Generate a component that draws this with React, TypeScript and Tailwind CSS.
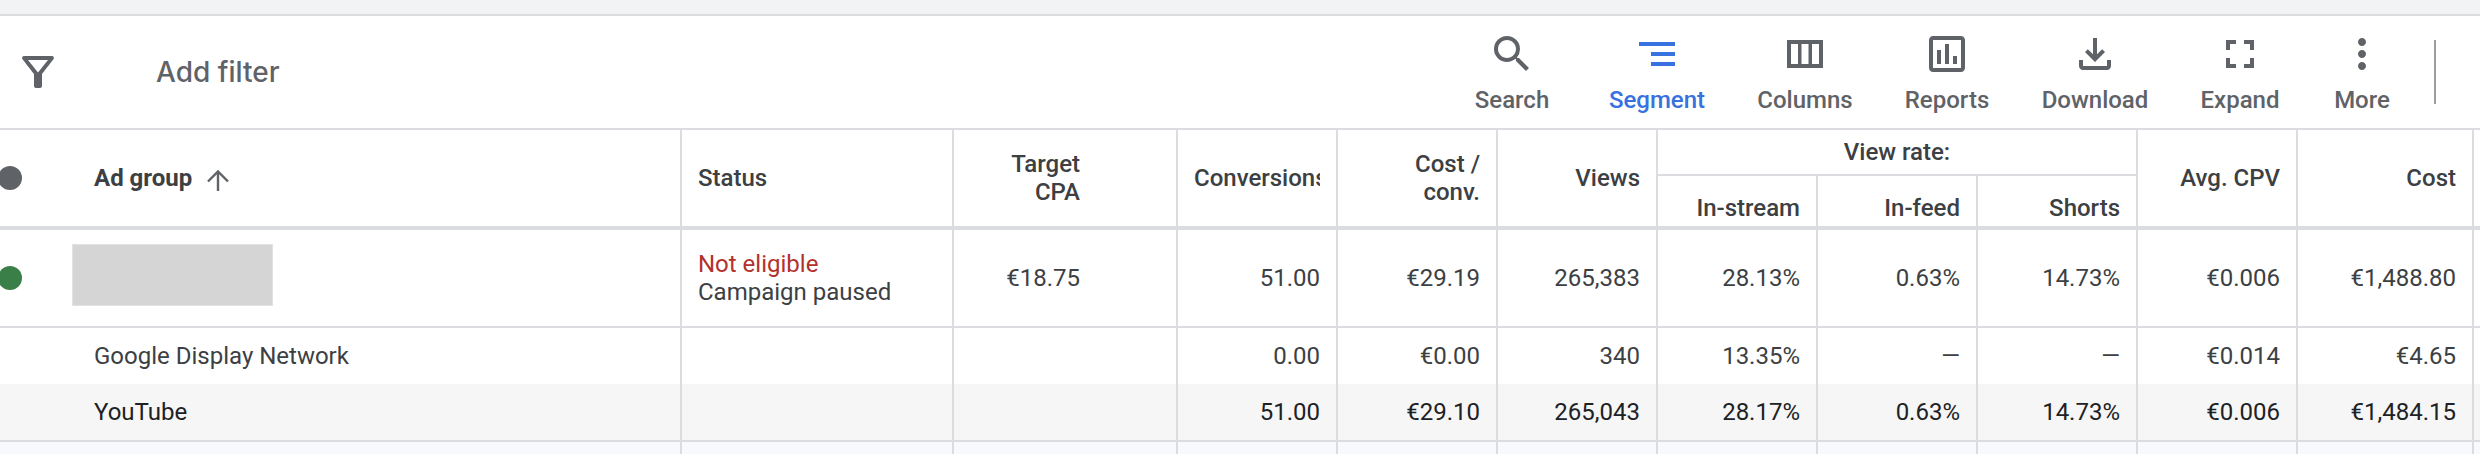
import React from 'react';
import clsx from 'clsx';

interface Tool {
  label: string;
  width: string;
  active?: boolean;
  icon: React.ReactNode;
}

interface Row {
  name: string | null; // null = name is hidden
  enabled?: boolean;
  status?: string[];
  values: string[];
  rowClass: string;
  cellClass: string;
}

const TOOLS: Tool[] = [
  {
    label: 'Search',
    width: 'w-[140px]',
    icon: (
      <path d="M15.5 14h-.79l-.28-.27A6.47 6.47 0 0 0 16 9.5 6.5 6.5 0 1 0 9.5 16c1.61 0 3.09-.59 4.23-1.57l.27.28v.79l5 4.99L20.49 19l-4.99-5zm-6 0C7.01 14 5 11.99 5 9.5S7.01 5 9.5 5 14 7.01 14 9.5 11.99 14 9.5 14z" />
    ),
  },
  {
    label: 'Segment',
    width: 'w-[150px]',
    active: true,
    icon: <path d="M3 6h18v2H3zM9 11h12v2H9zM9 16h12v2H9z" />,
  },
  {
    label: 'Columns',
    width: 'w-[146px]',
    icon: (
      <path
        fillRule="evenodd"
        d="M3 5h18v14H3zM5 7v10h3.5V7zM10.25 7v10h3.5V7zM15.5 7v10H19V7z"
      />
    ),
  },
  {
    label: 'Reports',
    width: 'w-[138px]',
    icon: (
      <path
        fillRule="evenodd"
        d="M5 3h14c1.1 0 2 .9 2 2v14c0 1.1-.9 2-2 2H5c-1.1 0-2-.9-2-2V5c0-1.1.9-2 2-2zM5 5v14h14V5zM7 10h2v7H7zM11 7h2v10h-2zM15 13h2v4h-2z"
      />
    ),
  },
  {
    label: 'Download',
    width: 'w-[158px]',
    icon: (
      <path d="M18 15v3H6v-3H4v3c0 1.1.9 2 2 2h12c1.1 0 2-.9 2-2v-3h-2zm-1-4-1.41-1.41L13 12.17V4h-2v8.17L8.41 9.59 7 11l5 5 5-5z" />
    ),
  },
  {
    label: 'Expand',
    width: 'w-[132px]',
    icon: (
      <path d="M7 14H5v5h5v-2H7v-3zm-2-4h2V7h3V5H5v5zm12 7h-3v2h5v-5h-2v3zM14 5v2h3v3h2V5h-5z" />
    ),
  },
  {
    label: 'More',
    width: 'w-[112px]',
    icon: (
      <path d="M12 8c1.1 0 2-.9 2-2s-.9-2-2-2-2 .9-2 2 .9 2 2 2zm0 2c-1.1 0-2 .9-2 2s.9 2 2 2 2-.9 2-2-.9-2-2-2zm0 6c-1.1 0-2 .9-2 2s.9 2 2 2 2-.9 2-2-.9-2-2-2z" />
    ),
  },
];

const ROWS: Row[] = [
  {
    name: null,
    enabled: true,
    status: ['Not eligible', 'Campaign paused'],
    values: ['€18.75', '51.00', '€29.19', '265,383', '28.13%', '0.63%', '14.73%', '€0.006', '€1,488.80'],
    rowClass: 'h-[98px] text-[#3c4043]',
    cellClass: 'border-b-2',
  },
  {
    name: 'Google Display Network',
    values: ['', '0.00', '€0.00', '340', '13.35%', '—', '—', '€0.014', '€4.65'],
    rowClass: 'h-14 text-[#3c4043]',
    cellClass: '',
  },
  {
    name: 'YouTube',
    values: ['', '51.00', '€29.10', '265,043', '28.17%', '0.63%', '14.73%', '€0.006', '€1,484.15'],
    rowClass: 'h-[58px] bg-[#f6f6f6] text-[#202124]',
    cellClass: 'border-b-2',
  },
];

const Icon: React.FC<{ children: React.ReactNode }> = ({ children }) => (
  <svg viewBox="0 0 24 24" className="size-12 shrink-0" fill="currentColor" aria-hidden="true">
    {children}
  </svg>
);

const Toolbar: React.FC = () => (
  <div className="flex items-center border-b-2 border-[#dadce0] bg-white h-[114px] text-[#5f6368]">
    <label htmlFor="filter" className="ml-3.5">
      <Icon>
        <path
          fillRule="evenodd"
          d="M7 6h10l-5.01 6.3L7 6zM4.25 5.61C6.27 8.2 10 13 10 13v6c0 .55.45 1 1 1h2c.55 0 1-.45 1-1v-6s3.72-4.8 5.74-7.39c.51-.66.04-1.61-.79-1.61H5.04c-.83 0-1.3.95-.79 1.61z"
        />
      </Icon>
    </label>
    <input
      id="filter"
      type="text"
      placeholder="Add filter"
      className="ml-[94px] min-w-0 flex-1 font-[Inter,sans-serif] text-[28px] leading-9 font-medium outline-none placeholder:text-[#5f6368]"
    />
    <div className="flex">
      {TOOLS.map(tool => (
        <button
          key={tool.label}
          type="button"
          className={clsx(
            'flex flex-col items-center gap-2 text-[24px] leading-7 font-medium',
            tool.width,
            tool.active && 'text-[#3871e0]'
          )}
        >
          <Icon>{tool.icon}</Icon>
          {tool.label}
        </button>
      ))}
    </div>
    <div className="ml-4 mr-11 h-16 w-0.5 bg-[#9e9e9e]" />
  </div>
);

const headCell = 'border-r-2 border-b-4 border-[#dadce0] px-4 font-medium text-right';
const subHeadCell = 'border-r-2 border-b-4 border-[#dadce0] px-4 pb-1 font-medium text-right align-bottom';

const AdGroupTable: React.FC = () => (
  <table className="w-full table-fixed border-separate border-spacing-0 text-[24px] leading-7">
    <colgroup>
      <col className="w-[72px]" />
      <col />
      <col className="w-[272px]" />
      <col className="w-[224px]" />
      <col className="w-[160px]" />
      <col className="w-[160px]" />
      <col className="w-[160px]" />
      <col className="w-[160px]" />
      <col className="w-[160px]" />
      <col className="w-[160px]" />
      <col className="w-[160px]" />
      <col className="w-[176px]" />
      <col className="w-[6px]" />
    </colgroup>
    <thead className="text-[#3c4043]">
      <tr className="h-[46px]">
        <th rowSpan={2} className="border-b-4 border-[#dadce0]">
          <div className="-ml-0.5 size-6 rounded-full bg-[#5f6368]" />
        </th>
        <th rowSpan={2} className="border-r-2 border-b-4 border-[#dadce0] pl-[22px] text-left">
          <button type="button" className="flex items-center gap-3 font-bold">
            Ad group
            <svg viewBox="0 0 28 28" className="size-7" fill="none" stroke="#5f6368" strokeWidth="2.4" aria-hidden="true">
              <path d="M14 27V8M4 17.5 14 7.5l10 10" />
            </svg>
          </button>
        </th>
        <th rowSpan={2} className="border-r-2 border-b-4 border-[#dadce0] px-4 font-medium text-left">Status</th>
        <th rowSpan={2} className="border-r-2 border-b-4 border-[#dadce0] pr-24 font-medium text-right">
          Target<br />CPA
        </th>
        <th rowSpan={2} className="border-r-2 border-b-4 border-[#dadce0] px-4 font-medium text-left">
          <div className="overflow-hidden">Conversions</div>
        </th>
        <th rowSpan={2} className={headCell}>Cost /<br />conv.</th>
        <th rowSpan={2} className={headCell}>Views</th>
        <th colSpan={3} className="border-r-2 border-b-2 border-[#dadce0] font-medium text-center">View rate:</th>
        <th rowSpan={2} className={headCell}>Avg. CPV</th>
        <th rowSpan={2} className={headCell}>Cost</th>
        <th rowSpan={2} className="border-b-4 border-[#dadce0]" />
      </tr>
      <tr className="h-[54px]">
        <th className={subHeadCell}>In-stream</th>
        <th className={subHeadCell}>In-feed</th>
        <th className={subHeadCell}>Shorts</th>
      </tr>
    </thead>
    <tbody>
      {ROWS.map((row, index) => (
        <tr key={index} className={row.rowClass}>
          <td className={clsx('border-[#dadce0]', row.cellClass)}>
            {row.enabled && <div className="-ml-0.5 size-6 rounded-full bg-[#3a7f48]" />}
          </td>
          <td className={clsx('border-r-2 border-[#dadce0]', row.cellClass, row.name ? 'pl-[22px]' : 'pb-1.5')}>
            {row.name ?? <div className="h-[62px] w-[201px] border border-[#e2e2e2] bg-[#d5d5d5]" />}
          </td>
          <td className={clsx('border-r-2 border-[#dadce0] px-4', row.cellClass)}>
            {row.status && (
              <>
                <div className="text-[#b3312b]">{row.status[0]}</div>
                <div>{row.status[1]}</div>
              </>
            )}
          </td>
          {row.values.map((value, i) => (
            <td
              key={i}
              className={clsx('border-r-2 border-[#dadce0] text-right', row.cellClass, i === 0 ? 'pr-24' : 'pr-4')}
            >
              {value}
            </td>
          ))}
          <td className={clsx('border-[#dadce0]', row.cellClass)} />
        </tr>
      ))}
      {/* top of the next ad group */}
      <tr className="h-3 bg-[#f8f9fc]">
        <td />
        {Array.from({ length: 11 }, (_, i) => (
          <td key={i} className="border-r-2 border-[#dadce0]" />
        ))}
        <td />
      </tr>
    </tbody>
  </table>
);

const App: React.FC = () => {
  return (
    <div className="bg-white font-[Roboto,sans-serif] overflow-hidden">
      <div className="h-4 border-b-2 border-[#dadce0] bg-[#f1f3f4]" />
      <Toolbar />
      <AdGroupTable />
    </div>
  );
};

export default App;
